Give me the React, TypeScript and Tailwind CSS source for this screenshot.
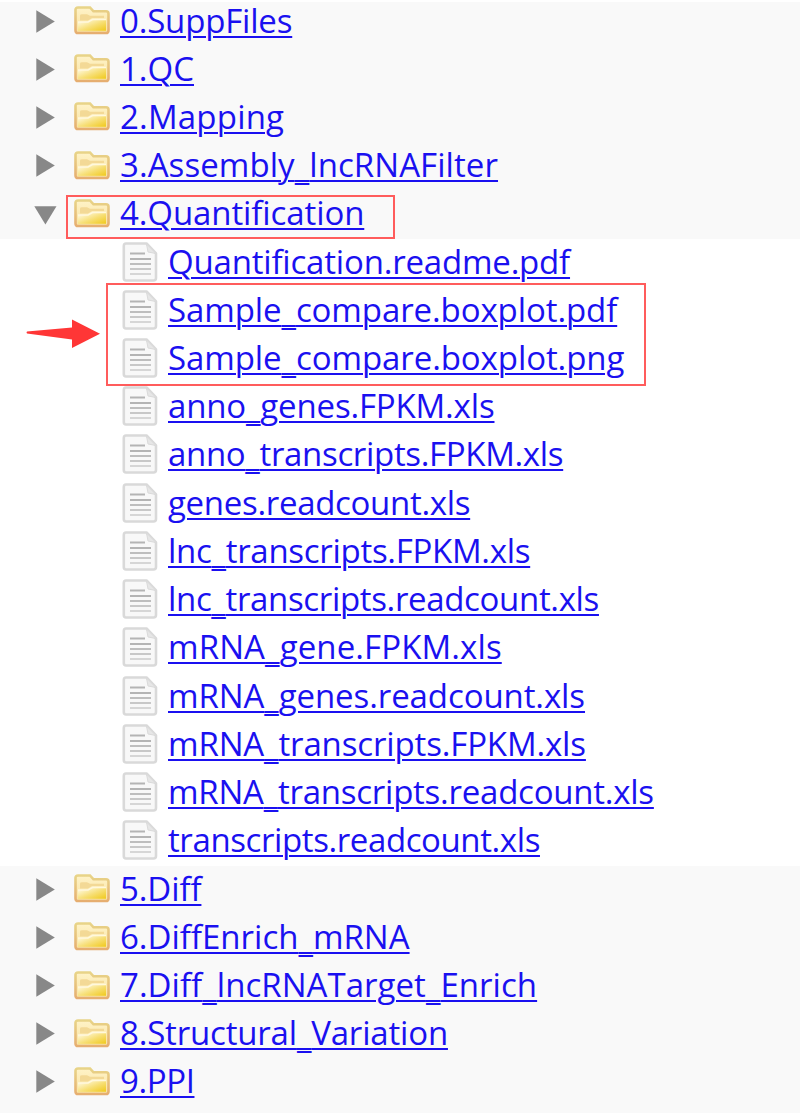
import { Fragment } from 'react';

type Row = { name: string; tracking: string };

const before: Row[] = [
  { name: '0.SuppFiles', tracking: 'tracking-[-0.18px]' },
  { name: '1.QC', tracking: 'tracking-[0px]' },
  { name: '2.Mapping', tracking: 'tracking-[0.2px]' },
  { name: '3.Assembly_lncRNAFilter', tracking: 'tracking-[0.07px]' },
  { name: '4.Quantification', tracking: 'tracking-[-0.1px]' },
];

const files: Row[] = [
  { name: 'Quantification.readme.pdf', tracking: 'tracking-[-0.19px]' },
  { name: 'Sample_compare.boxplot.pdf', tracking: 'tracking-[-0.09px]' },
  { name: 'Sample_compare.boxplot.png', tracking: 'tracking-[-0.08px]' },
  { name: 'anno_genes.FPKM.xls', tracking: 'tracking-[-0.16px]' },
  { name: 'anno_transcripts.FPKM.xls', tracking: 'tracking-[-0.33px]' },
  { name: 'genes.readcount.xls', tracking: 'tracking-[-0.31px]' },
  { name: 'lnc_transcripts.FPKM.xls', tracking: 'tracking-[-0.29px]' },
  { name: 'lnc_transcripts.readcount.xls', tracking: 'tracking-[-0.34px]' },
  { name: 'mRNA_gene.FPKM.xls', tracking: 'tracking-[0.11px]' },
  { name: 'mRNA_genes.readcount.xls', tracking: 'tracking-[-0.09px]' },
  { name: 'mRNA_transcripts.FPKM.xls', tracking: 'tracking-[-0.14px]' },
  { name: 'mRNA_transcripts.readcount.xls', tracking: 'tracking-[-0.24px]' },
  { name: 'transcripts.readcount.xls', tracking: 'tracking-[-0.4px]' },
];

const after: Row[] = [
  { name: '5.Diff', tracking: 'tracking-[-0.1px]' },
  { name: '6.DiffEnrich_mRNA', tracking: 'tracking-[0px]' },
  { name: '7.Diff_lncRNATarget_Enrich', tracking: 'tracking-[0.04px]' },
  { name: '8.Structural_Variation', tracking: 'tracking-[-0.18px]' },
  { name: '9.PPI', tracking: 'tracking-[-0.4px]' },
];

function Toggle({ open }: { open: boolean }) {
  return (
    <svg className="h-6 w-6 shrink-0" viewBox="0 0 24 24" fill="#888888">
      {open ? <path d="M1.3 5.2H23.5L12.4 23.5Z" /> : <path d="M3.3 1.3V23.8L21.8 12.5Z" />}
    </svg>
  );
}

function FolderIcon() {
  return (
    <svg className="h-[29px] w-9 shrink-0" viewBox="0 0 36 30" preserveAspectRatio="none">
      <defs>
        <linearGradient id="folderEdge" x1="0" y1="0" x2="0" y2="1">
          <stop offset="0" stopColor="#e8d488" />
          <stop offset="1" stopColor="#e6ae70" />
        </linearGradient>
        <linearGradient id="folderBack" x1="0" y1="0" x2="0" y2="1">
          <stop offset="0" stopColor="#fff3c8" />
          <stop offset="1" stopColor="#f8e2a0" />
        </linearGradient>
        <linearGradient id="folderFront" x1="0" y1="0" x2="1" y2="1">
          <stop offset="0.1" stopColor="#fff9de" />
          <stop offset="0.55" stopColor="#f7df76" />
          <stop offset="1" stopColor="#f0c91c" />
        </linearGradient>
      </defs>
      <path d="M1.5 4Q1.5 1.5 4 1.5H16L19.5 5.5H32Q34.5 5.5 34.5 8V25Q34.5 28 32 28H4Q1.5 28 1.5 25Z" fill="url(#folderBack)" stroke="url(#folderEdge)" strokeWidth="2.6" />
      <path d="M6 10Q6 8.5 8 8.5H13L16 10H30V12.5H18L14 15H6Z" fill="#f3d996" />
      <path d="M4 16.5H14L18.5 14H32V25.5H4Z" fill="url(#folderFront)" />
      <path d="M4 16.5H14L18.5 14H32" fill="none" stroke="#fff8dd" strokeWidth="1.5" />
    </svg>
  );
}

function FileIcon() {
  return (
    <svg className="h-10 w-9 shrink-0" viewBox="0 0 36 40">
      <path d="M4 1.5H24.5L34 11.5V36Q34 38.5 31.5 38.5H4Q1.8 38.5 1.8 36V4Q1.8 1.5 4 1.5Z" fill="#f8f8f8" stroke="#d9d9d9" strokeWidth="2.6" strokeLinejoin="round" />
      <path d="M24.5 2L26 10L34 11.5Z" fill="#e6e6e6" stroke="#dadada" />
      <g strokeWidth="2">
        <path d="M8 11.5H23" stroke="#b4b4b4" />
        <path d="M8 17H29" stroke="#b4b4b4" />
        <path d="M8 22H29" stroke="#bebebe" />
        <path d="M8 27H29" stroke="#c8c8c8" />
        <path d="M8 32H29" stroke="#d6d6d6" />
      </g>
    </svg>
  );
}

function Link({ row }: { row: Row }) {
  return (
    <a
      href="#"
      className={
        'whitespace-nowrap text-[33px] leading-[44px] text-[#1a10f0] underline decoration-2 underline-offset-[3px] ' +
        row.tracking
      }
    >
      {row.name.split('_').map((part, i) => (
        <Fragment key={i}>
          {i > 0 && <span className="align-[-3px] leading-none [text-decoration-skip-ink:none]">_</span>}
          {part}
        </Fragment>
      ))}
    </a>
  );
}

function Folder({ row, open = false }: { row: Row; open?: boolean }) {
  return (
    <li className="flex h-[48.23px] shrink-0 items-center pb-[3px] pl-[33px]">
      <Toggle open={open} />
      <span className="ml-[17px] mr-[10px] flex">
        <FolderIcon />
      </span>
      <Link row={row} />
    </li>
  );
}

function File({ row }: { row: Row }) {
  return (
    <li className="flex h-[48.23px] items-center gap-[10px] pb-[3px] pl-[122px]">
      <FileIcon />
      <Link row={row} />
    </li>
  );
}

export default function App() {
  return (
    <main className="relative h-[1114px] w-[800px] overflow-hidden bg-white font-['Open_Sans','Noto_Sans',sans-serif]">
      <div className="h-[2px]" />
      <ul className="flex h-[237px] flex-col justify-end bg-[#f9f9f9]">
        {before.map((r, i) => (
          <Folder key={r.name} row={r} open={i === 4} />
        ))}
      </ul>
      <ul className="h-[627px]">
        {files.map((r) => (
          <File key={r.name} row={r} />
        ))}
      </ul>
      <ul className="h-[247px] bg-[#f9f9f9]">
        {after.map((r) => (
          <Folder key={r.name} row={r} />
        ))}
      </ul>
      <div className="absolute left-[66px] top-[195px] h-[44px] w-[329px] border-2 border-[#ff5c5c]" />
      <div className="absolute left-[106px] top-[283px] h-[103px] w-[540px] border-2 border-[#ff5c5c]" />
      <svg className="absolute left-[25px] top-[318px] h-8 w-[76px]" viewBox="0 0 76 32" fill="#ff3636">
        <path d="M2 13.5Q1 14.5 2 15.5L47 21.5V30L75 15.8L47 1.5V9.5Z" />
      </svg>
    </main>
  );
}
